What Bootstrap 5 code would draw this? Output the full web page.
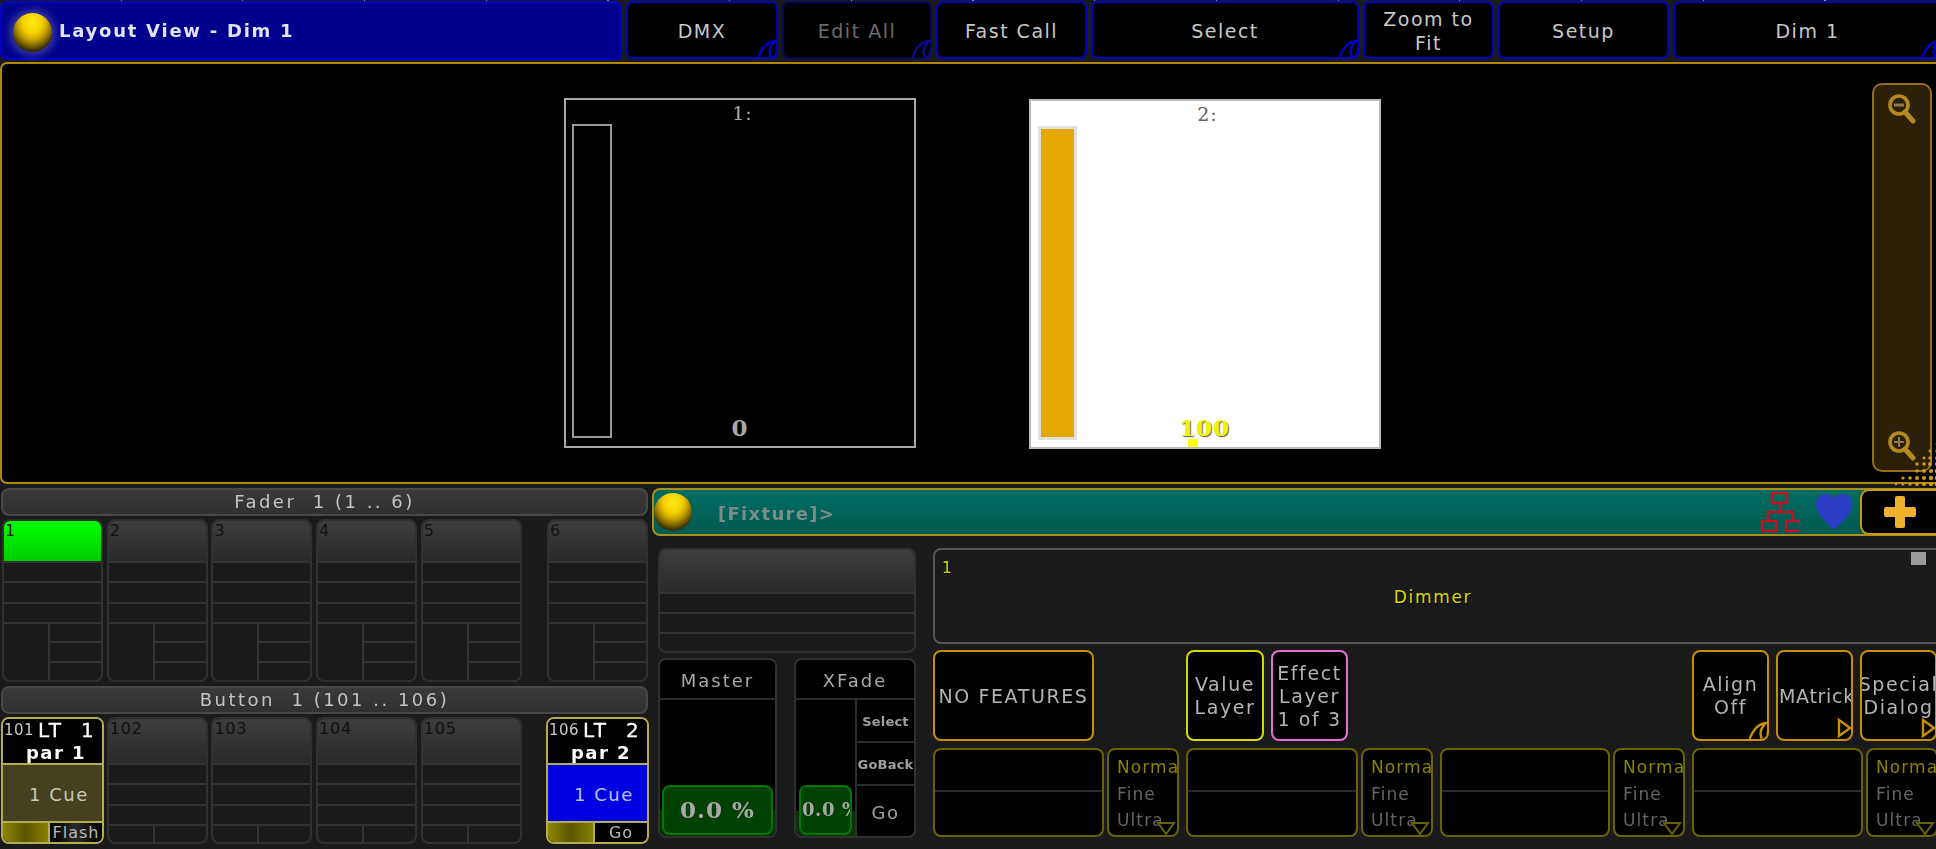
<!DOCTYPE html>
<html lang="en">
<head>
<meta charset="utf-8">
<title>Layout View - Dim 1</title>
<link href="https://cdn.jsdelivr.net/npm/bootstrap@5.3.0/dist/css/bootstrap.min.css" rel="stylesheet">
<style>
html,body{background:#1a1a1a;}
body{width:1936px;height:849px;overflow:hidden;font-family:"DejaVu Sans",sans-serif;color:#c4c4c4;font-size:18px;letter-spacing:2px;line-height:1.3;}
.ma-root{position:relative;width:1945px;filter:blur(.35px);}
.ma-root::before{content:"";position:absolute;left:0;top:0;right:0;height:1px;z-index:2;background:repeating-linear-gradient(90deg,transparent 0,transparent 120.5px,#8a8ab0 120.5px,#8a8ab0 121.7px);}
.ma-top{display:grid;grid-template-columns:622px 152px 150px 151px 268px 131px 171px 269px;column-gap:4px;height:60px;padding-top:1px;}
.ma-title{background:#00008c;border:2px solid #0000cc;border-radius:7px;padding-left:11px;gap:7px;color:#e2e2f2;font-weight:700;font-size:18px;letter-spacing:1.75px;}
.ma-title span:last-child{margin-top:1px;}
.ma-topbtn{position:relative;background:#000;border:2px solid #0000c4;border-radius:7px;height:58px;padding:2px 0 0;color:#c8c8c8;font-size:19px;line-height:24px;letter-spacing:1.5px;}
.ma-topbtn.ma-dim{border-color:#06065c;color:#6a6a6a;}
.ma-curl{position:absolute;right:-2px;bottom:-2px;width:20px;height:20px;}
.ma-ball{width:39px;height:39px;border-radius:50%;flex:none;background:radial-gradient(ellipse 62% 72% at 50% 24%,#ffe818 0,#f4d000 40%,#c8a200 62%,#7c6400 84%,#3c3000 100%);}
.ma-title .ma-ball{box-shadow:0 0 9px 3px rgba(120,120,190,.55);margin-top:3px;}
.ma-view{position:relative;height:422px;margin-top:2px;background:#000;border:2px solid #b0860c;border-radius:7px;}
.ma-fix{position:absolute;width:352px;border:2px solid #a8a8a8;font-size:19px;color:#aaa;letter-spacing:1px;}
.ma-fix-a{left:562px;top:34px;height:350px;background:#000;}
.ma-fix-b{left:1027px;top:35px;height:350px;background:#fff;border-color:#bbb;color:#666;}
.ma-fix-name{line-height:22px;padding-top:2px;padding-left:5px;font-family:"DejaVu Serif","DejaVu Sans",serif;}
.ma-bar{position:absolute;left:6px;top:24px;width:40px;height:314px;border:2px solid #9a9a9a;}
.ma-fix-b .ma-bar{left:7px;top:25px;width:39px;border:3px solid #e0e0e0;background:#e5a800;}
.ma-val{position:absolute;left:0;right:0;bottom:6px;line-height:24px;font-weight:700;color:#a8a8a8;font-size:23px;font-family:"DejaVu Serif",serif;letter-spacing:.8px;}
.ma-fix-b .ma-val{color:#f4f400;text-shadow:1px 1px 1px #555;bottom:7px;left:-1px;right:0;}
.ma-dot{position:absolute;left:157px;bottom:0;width:10px;height:8px;background:#ff0;}
.ma-scroll{position:absolute;left:1870px;top:19px;width:60px;height:389px;background:#2c2008;border:2px solid #94701a;border-radius:10px;padding:9px 0;}
.ma-half{position:absolute;left:1893px;top:375px;width:45px;height:47px;}
.ma-bottom{display:grid;grid-template-columns:646px 1293px;column-gap:4px;padding-left:2px;}
.ma-left{padding-top:4px;}
.ma-band{height:28px;margin-left:-1px;background:linear-gradient(#3a3a3a,#303030);border:2px solid #484848;border-radius:8px;text-align:center;line-height:24px;white-space:pre;color:#c4c4c4;font-size:18px;letter-spacing:2.5px;}
.ma-cells{display:flex;gap:3.7px;margin-top:3px;margin-bottom:4px;}
.ma-cell{width:101px;height:163px;border:2px solid #303030;border-radius:8px;background:#1a1a1a;overflow:hidden;display:flex;flex-direction:column;}
.ma-cells-b .ma-cell{height:127px;}
.ma-head{height:40px;flex:none;background:linear-gradient(#3e3e3e,#2a2a2a);color:#121212;font-size:16px;line-height:20px;padding-left:1px;letter-spacing:.8px;}
.ma-cells-b .ma-head{height:44px;}
.ma-head.ma-green{background:linear-gradient(#00ff00,#00cc00);border-radius:4px 4px 0 0;}
.ma-line{height:20.3px;flex:none;border-top:2px solid #333;}
.ma-split{flex:1 1 auto;display:flex;border-top:2px solid #333;min-height:0;}
.ma-split-l{width:46px;flex:none;border-right:2px solid #333;}
.ma-split-r{flex:1 1 auto;display:flex;flex-direction:column;}
.ma-split-r>div{flex:1 1 0;}
.ma-split-r>div+div{border-top:2px solid #333;}
.ma-cell.ma-live{border-color:#b4ac50;margin:0 -1px;width:103px;background:#000;}
.ma-live-head{height:44px;flex:none;background:#000;position:relative;color:#fff;font-weight:700;text-align:center;font-size:18px;line-height:23px;}
.ma-live-num{color:#c8c8c8;font-size:15px;font-weight:400;position:absolute;left:1px;top:0;letter-spacing:.4px;}
.ma-live-name{display:block;padding-left:35px;text-align:left;white-space:pre;font-weight:400;font-size:20px;letter-spacing:2.4px;-webkit-text-stroke:.3px #fff;overflow:hidden;}
.ma-live-sub{display:block;padding-left:7px;font-size:18px;letter-spacing:1.5px;line-height:21px;}
.ma-live-body{flex:1 1 auto;border-top:2px solid #b4ac50;border-bottom:2px solid #b4ac50;padding:3px 0 0 26px;font-size:18px;letter-spacing:1.5px;color:#c8c8b8;}
.ma-olive{background:#444020;}
.ma-blue{background:#0000e0;color:#b8c0ff;}
.ma-live-foot{height:19px;flex:none;display:flex;background:#000;}
.ma-meter{width:47px;flex:none;background:linear-gradient(90deg,#8c8600,#5a5600,#868000);border-right:2px solid #b4ac50;}
.ma-foot-txt{flex:1 1 auto;color:#b8b8b8;font-size:16px;line-height:19px;text-align:center;letter-spacing:1px;overflow:hidden;}
.ma-foot-flash{background:linear-gradient(90deg,#000,#2a2a2a 50%,#000);}
.ma-cmd{height:48px;margin-top:4px;background:linear-gradient(#006c62,#005a50);border:2px solid #a89016;border-right:0;border-radius:8px 0 0 8px;}
.ma-cmd .ma-ball{width:38px;height:38px;margin-left:0;}
.ma-cmd-txt{margin-left:26px;margin-top:3px;color:#7c8c88;font-weight:700;font-size:18px;letter-spacing:1.3px;}
.ma-tree{width:40px;height:42px;margin-left:auto;}
.ma-heart{width:40px;height:40px;margin-left:14px;}
.ma-plus{width:85px;height:46px;flex:none;margin-left:6px;background:#000;border:2px solid #c89a10;border-radius:9px 0 0 9px;border-right:0;padding:0 0 0 22px;display:flex;align-items:center;margin-top:-1px;}
.ma-work{display:grid;grid-template-columns:258px 1012px;column-gap:17px;margin-top:12px;padding-left:6px;}
.ma-master-top{width:258px;height:105px;}
.ma-master-top .ma-head{height:42px;}
.ma-master-top .ma-line{height:20px;}
.ma-faders{display:grid;grid-template-columns:119px 122px;column-gap:17px;margin-top:5px;}
.ma-fad{height:180px;background:#000;border:2px solid #303030;border-radius:8px;overflow:hidden;display:flex;flex-direction:column;}
.ma-fad-head{height:40px;flex:none;border-bottom:2px solid #2c2c2c;color:#a8a8a8;font-size:18px;letter-spacing:2px;padding-top:3px;}
.ma-fad-body{flex:1 1 auto;position:relative;display:flex;min-height:0;}
.ma-fad-l{position:relative;flex:1 1 auto;overflow:hidden;}
.ma-fad-band{position:absolute;left:0;right:0;bottom:0;height:25px;background:#0c300c;}
.ma-fad-btn{position:absolute;left:2px;right:2px;bottom:1px;height:50px;background:#004000;border:2px solid #007800;border-radius:8px;font-weight:700;color:#a8a8a8;font-size:23px;letter-spacing:1px;font-family:"DejaVu Serif",serif;white-space:nowrap;overflow:hidden;}
.ma-fad-btn.ma-small{left:3px;right:3px;font-size:18px;justify-content:flex-start!important;padding-left:1px;letter-spacing:.6px;}
.ma-fad-r{width:59px;flex:none;border-left:2px solid #2c2c2c;display:flex;flex-direction:column;}
.ma-fad-r>div{color:#a0a0a0;padding-top:3px;}
.ma-fad-sel{height:43px;font-size:13px;font-weight:700;letter-spacing:.2px;border-bottom:2px solid #2c2c2c;}
.ma-fad-go{flex:1 1 auto;font-size:18px;letter-spacing:1.6px;}
.ma-dimbox{position:relative;height:96px;background:#1a1a1a;border:2px solid #555;border-radius:8px;color:#d8d800;text-shadow:1px 1px 1px #000;padding:2px 12px 0 0;}
.ma-dim1{position:absolute;left:7px;top:8px;font-size:15px;letter-spacing:0;line-height:20px;}
.ma-dimname{font-size:17px;letter-spacing:1.7px;}
.ma-sq{position:absolute;right:17px;top:2px;width:15px;height:13px;background:#9a9a9a;}
.ma-btnrow{display:grid;grid-template-columns:161px 78px 78px 77px 330px 77px 77px 77px;column-gap:7px;margin-top:6px;}
.ma-key{position:relative;height:91px;padding-top:1px;background:#000;border:2px solid #c89000;border-radius:8px;color:#b4b4b4;text-align:center;line-height:23px;font-size:19px;letter-spacing:1.6px;white-space:nowrap;overflow:hidden;}
.ma-key.ma-yellow{border-color:#d8d800;}
.ma-key.ma-pink{border-color:#e070d4;}
.ma-key.ma-clip{justify-content:flex-start!important;padding-left:1px;letter-spacing:.7px;}
.ma-enc{display:grid;grid-template-columns:246px 247px 245px 246px;column-gap:7px;margin-top:7px;}
.ma-pair{display:flex;gap:3px;}
.ma-encbox{flex:1 1 auto;height:89px;background:#000;border:2px solid #686200;border-radius:8px;overflow:hidden;}
.ma-encbox>div{height:42px;border-bottom:2px solid #2a2a2a;}
.ma-norm{position:relative;width:72px;flex:none;height:89px;background:#000;border:2px solid #686200;border-radius:8px;padding:4px 0 0 8px;color:#646464;font-size:17px;line-height:26.7px;letter-spacing:1.1px;overflow:hidden;white-space:nowrap;}
.ma-norm b{font-weight:400;color:#8a8400;display:block;}
.ma-norm span{display:block;}
.ma-tri{position:absolute;right:1px;bottom:0;width:20px;height:13px;}
.ma-arrow{position:absolute;right:-1px;bottom:1px;width:15px;height:20px;}
</style>
</head>
<body>
<div class="ma-root">
  <div class="ma-top">
    <div class="ma-title d-flex align-items-center"><span class="ma-ball"></span><span>Layout View - Dim 1</span></div>
    <button class="btn ma-topbtn">DMX<svg class="ma-curl" viewBox="0 0 20 20"><path d="M0 19C3 12 7 3 17 2C11 7 10 15 14 19C17 19 19 15 19 10" fill="#000" stroke="#0000c4" stroke-width="2.4"/></svg></button>
    <button class="btn ma-topbtn ma-dim">Edit All<svg class="ma-curl" viewBox="0 0 20 20"><path d="M0 19C3 12 7 3 17 2C11 7 10 15 14 19C17 19 19 15 19 10" fill="#000" stroke="#0a0a90" stroke-width="2.4"/></svg></button>
    <button class="btn ma-topbtn">Fast Call</button>
    <button class="btn ma-topbtn">Select<svg class="ma-curl" viewBox="0 0 20 20"><path d="M0 19C3 12 7 3 17 2C11 7 10 15 14 19C17 19 19 15 19 10" fill="#000" stroke="#0000c4" stroke-width="2.4"/></svg></button>
    <button class="btn ma-topbtn">Zoom to<br>Fit</button>
    <button class="btn ma-topbtn">Setup</button>
    <button class="btn ma-topbtn">Dim 1<svg class="ma-curl" viewBox="0 0 20 20"><path d="M0 19C3 12 7 3 17 2C11 7 10 15 14 19C17 19 19 15 19 10" fill="#000" stroke="#0000c4" stroke-width="2.4"/></svg></button>
  </div>

  <div class="ma-view">
    <div class="ma-fix ma-fix-a text-center"><div class="ma-fix-name">1:</div><div class="ma-bar"></div><div class="ma-val">0</div></div>
    <div class="ma-fix ma-fix-b text-center"><div class="ma-fix-name">2:</div><div class="ma-bar"></div><div class="ma-val">100</div><div class="ma-dot"></div></div>
    <div class="ma-scroll d-flex flex-column justify-content-between align-items-center">
      <svg width="28" height="30" viewBox="0 0 28 30"><circle cx="11" cy="11" r="9" fill="none" stroke="#b48a20" stroke-width="3.6"/><path d="M17 18L25 27" stroke="#b48a20" stroke-width="5" stroke-linecap="round"/><path d="M6 11H16" stroke="#8a7a50" stroke-width="3"/></svg>
      <svg width="28" height="30" viewBox="0 0 28 30"><circle cx="11" cy="11" r="9" fill="none" stroke="#b48a20" stroke-width="3.6"/><path d="M17 18L25 27" stroke="#b48a20" stroke-width="5" stroke-linecap="round"/><path d="M6 11H16M11 6V16" stroke="#8a7a50" stroke-width="2"/></svg>
    </div>
    <svg class="ma-half" viewBox="0 0 45 47"><g fill="#d09a20"><circle cx="1" cy="45" r="1.3"/><circle cx="8" cy="45" r="1.6"/><circle cx="15" cy="45" r="1.7"/><circle cx="22" cy="45" r="1.9"/><circle cx="29" cy="45" r="2"/><circle cx="36" cy="45" r="2.1"/><circle cx="42" cy="45" r="2.3"/><circle cx="8" cy="39" r="1.6"/><circle cx="15" cy="39" r="1.8"/><circle cx="22" cy="39" r="2"/><circle cx="29" cy="39" r="2.1"/><circle cx="36" cy="39" r="2.2"/><circle cx="42" cy="39" r="2.3"/><circle cx="22" cy="32" r="1.8"/><circle cx="29" cy="32" r="2"/><circle cx="36" cy="32" r="2.1"/><circle cx="42" cy="32" r="2.3"/><circle cx="22" cy="25" r="1.7"/><circle cx="29" cy="25" r="1.8"/><circle cx="35" cy="25" r="2"/><circle cx="42" cy="25" r="2.1"/><circle cx="29" cy="19" r="1.5"/><circle cx="35" cy="19" r="1.7"/><circle cx="42" cy="19" r="1.9"/><circle cx="35" cy="12" r="1.4"/><circle cx="42" cy="12" r="1.7"/><circle cx="42" cy="5" r="1.4"/></g></svg>
  </div>

  <div class="ma-bottom">
    <div class="ma-left">
      <div class="ma-band">Fader  1 (1 .. 6)</div>
      <div class="ma-cells">
        <div class="ma-cell"><div class="ma-head ma-green">1</div><div class="ma-line"></div><div class="ma-line"></div><div class="ma-line"></div><div class="ma-split"><div class="ma-split-l"></div><div class="ma-split-r"><div></div><div></div><div></div></div></div></div>
        <div class="ma-cell"><div class="ma-head">2</div><div class="ma-line"></div><div class="ma-line"></div><div class="ma-line"></div><div class="ma-split"><div class="ma-split-l"></div><div class="ma-split-r"><div></div><div></div><div></div></div></div></div>
        <div class="ma-cell"><div class="ma-head">3</div><div class="ma-line"></div><div class="ma-line"></div><div class="ma-line"></div><div class="ma-split"><div class="ma-split-l"></div><div class="ma-split-r"><div></div><div></div><div></div></div></div></div>
        <div class="ma-cell"><div class="ma-head">4</div><div class="ma-line"></div><div class="ma-line"></div><div class="ma-line"></div><div class="ma-split"><div class="ma-split-l"></div><div class="ma-split-r"><div></div><div></div><div></div></div></div></div>
        <div class="ma-cell"><div class="ma-head">5</div><div class="ma-line"></div><div class="ma-line"></div><div class="ma-line"></div><div class="ma-split"><div class="ma-split-l"></div><div class="ma-split-r"><div></div><div></div><div></div></div></div></div>
        <div class="ma-cell ms-auto"><div class="ma-head">6</div><div class="ma-line"></div><div class="ma-line"></div><div class="ma-line"></div><div class="ma-split"><div class="ma-split-l"></div><div class="ma-split-r"><div></div><div></div><div></div></div></div></div>
      </div>
      <div class="ma-band">Button  1 (101 .. 106)</div>
      <div class="ma-cells ma-cells-b">
        <div class="ma-cell ma-live">
          <div class="ma-live-head"><span class="ma-live-num">101</span><span class="ma-live-name">LT  1</span><span class="ma-live-sub">par 1</span></div>
          <div class="ma-live-body ma-olive d-flex align-items-center">1 Cue</div>
          <div class="ma-live-foot"><div class="ma-meter"></div><div class="ma-foot-txt ma-foot-flash">Flash</div></div>
        </div>
        <div class="ma-cell"><div class="ma-head">102</div><div class="ma-line"></div><div class="ma-line"></div><div class="ma-line"></div><div class="ma-split"><div class="ma-split-l"></div></div></div>
        <div class="ma-cell"><div class="ma-head">103</div><div class="ma-line"></div><div class="ma-line"></div><div class="ma-line"></div><div class="ma-split"><div class="ma-split-l"></div></div></div>
        <div class="ma-cell"><div class="ma-head">104</div><div class="ma-line"></div><div class="ma-line"></div><div class="ma-line"></div><div class="ma-split"><div class="ma-split-l"></div></div></div>
        <div class="ma-cell"><div class="ma-head">105</div><div class="ma-line"></div><div class="ma-line"></div><div class="ma-line"></div><div class="ma-split"><div class="ma-split-l"></div></div></div>
        <div class="ma-cell ma-live ms-auto">
          <div class="ma-live-head"><span class="ma-live-num">106</span><span class="ma-live-name">LT  2</span><span class="ma-live-sub">par 2</span></div>
          <div class="ma-live-body ma-blue d-flex align-items-center">1 Cue</div>
          <div class="ma-live-foot"><div class="ma-meter"></div><div class="ma-foot-txt">Go</div></div>
        </div>
      </div>
    </div>

    <div>
      <div class="ma-cmd d-flex align-items-center">
        <span class="ma-ball"></span><span class="ma-cmd-txt">[Fixture]&gt;</span>
        <svg class="ma-tree" viewBox="0 0 40 42"><g fill="none" stroke="#c81020" stroke-width="2.4"><rect x="12" y="2" width="15" height="10"/><rect x="2" y="30" width="14" height="10"/><rect x="26" y="30" width="14" height="10"/><path d="M20 12V20M8 30V21H33V30"/></g></svg>
        <svg class="ma-heart" viewBox="0 0 40 40"><path d="M20 38C12 30 2 22 2 12C2 5 7 2 12 2C16 2 19 4 20 7C21 4 24 2 28 2C33 2 38 5 38 12C38 22 28 30 20 38Z" fill="#2a3cc4"/></svg>
        <div class="ma-plus"><svg width="32" height="32" viewBox="0 0 32 32"><path d="M11 2a2 2 0 0 1 2-2h6a2 2 0 0 1 2 2v9h9a2 2 0 0 1 2 2v6a2 2 0 0 1-2 2h-9v9a2 2 0 0 1-2 2h-6a2 2 0 0 1-2-2v-9H2a2 2 0 0 1-2-2v-6a2 2 0 0 1 2-2h9z" fill="#f0b030"/></svg></div>
      </div>
      <div class="ma-work">
        <div>
          <div class="ma-cell ma-master-top"><div class="ma-head"></div><div class="ma-line"></div><div class="ma-line"></div><div class="ma-line"></div></div>
          <div class="ma-faders">
            <div class="ma-fad">
              <div class="ma-fad-head d-flex align-items-center justify-content-center">Master</div>
              <div class="ma-fad-body"><div class="ma-fad-l"><div class="ma-fad-band"></div><div class="ma-fad-btn d-flex align-items-center justify-content-center">0.0 %</div></div></div>
            </div>
            <div class="ma-fad">
              <div class="ma-fad-head d-flex align-items-center justify-content-center">XFade</div>
              <div class="ma-fad-body">
                <div class="ma-fad-l"><div class="ma-fad-band"></div><div class="ma-fad-btn ma-small d-flex align-items-center justify-content-center">0.0 %</div></div>
                <div class="ma-fad-r">
                  <div class="ma-fad-sel d-flex align-items-center justify-content-center">Select</div>
                  <div class="ma-fad-sel d-flex align-items-center justify-content-center">GoBack</div>
                  <div class="ma-fad-go d-flex align-items-center justify-content-center">Go</div>
                </div>
              </div>
            </div>
          </div>
        </div>
        <div>
          <div class="ma-dimbox d-flex align-items-center justify-content-center"><span class="ma-dim1">1</span><span class="ma-dimname">Dimmer</span><span class="ma-sq"></span></div>
          <div class="ma-btnrow">
            <div class="ma-key d-flex align-items-center justify-content-center">NO FEATURES</div>
            <div></div>
            <div class="ma-key ma-yellow d-flex align-items-center justify-content-center">Value<br>Layer</div>
            <div class="ma-key ma-pink d-flex align-items-center justify-content-center">Effect<br>Layer<br>1 of 3</div>
            <div></div>
            <div class="ma-key d-flex align-items-center justify-content-center">Align<br>Off<svg class="ma-curl" viewBox="0 0 20 20"><path d="M0 19C3 12 7 3 17 2C11 7 10 15 14 19C17 19 19 15 19 10" fill="#000" stroke="#c89000" stroke-width="2.4"/></svg></div>
            <div class="ma-key ma-clip d-flex align-items-center justify-content-center">MAtrick<svg class="ma-arrow" viewBox="0 0 15 20"><path d="M2 2L13 10L2 18Z" fill="#000" stroke="#c89000" stroke-width="2.4"/></svg></div>
            <div class="ma-key d-flex align-items-center justify-content-center">Special<br>Dialog<svg class="ma-arrow" viewBox="0 0 15 20"><path d="M2 2L13 10L2 18Z" fill="#000" stroke="#c89000" stroke-width="2.4"/></svg></div>
          </div>
          <div class="ma-enc">
            <div class="ma-pair"><div class="ma-encbox"><div></div></div><div class="ma-norm"><b>Normal</b><span>Fine</span><span>Ultra</span><svg class="ma-tri" viewBox="0 0 20 13"><path d="M2 1H18L10 12Z" fill="#000" stroke="#686200" stroke-width="2"/></svg></div></div>
            <div class="ma-pair"><div class="ma-encbox"><div></div></div><div class="ma-norm"><b>Normal</b><span>Fine</span><span>Ultra</span><svg class="ma-tri" viewBox="0 0 20 13"><path d="M2 1H18L10 12Z" fill="#000" stroke="#686200" stroke-width="2"/></svg></div></div>
            <div class="ma-pair"><div class="ma-encbox"><div></div></div><div class="ma-norm"><b>Normal</b><span>Fine</span><span>Ultra</span><svg class="ma-tri" viewBox="0 0 20 13"><path d="M2 1H18L10 12Z" fill="#000" stroke="#686200" stroke-width="2"/></svg></div></div>
            <div class="ma-pair"><div class="ma-encbox"><div></div></div><div class="ma-norm"><b>Normal</b><span>Fine</span><span>Ultra</span><svg class="ma-tri" viewBox="0 0 20 13"><path d="M2 1H18L10 12Z" fill="#000" stroke="#686200" stroke-width="2"/></svg></div></div>
          </div>
        </div>
      </div>
    </div>
  </div>
</div>
<script src="https://cdn.jsdelivr.net/npm/bootstrap@5.3.0/dist/js/bootstrap.bundle.min.js"></script>
</body>
</html>
